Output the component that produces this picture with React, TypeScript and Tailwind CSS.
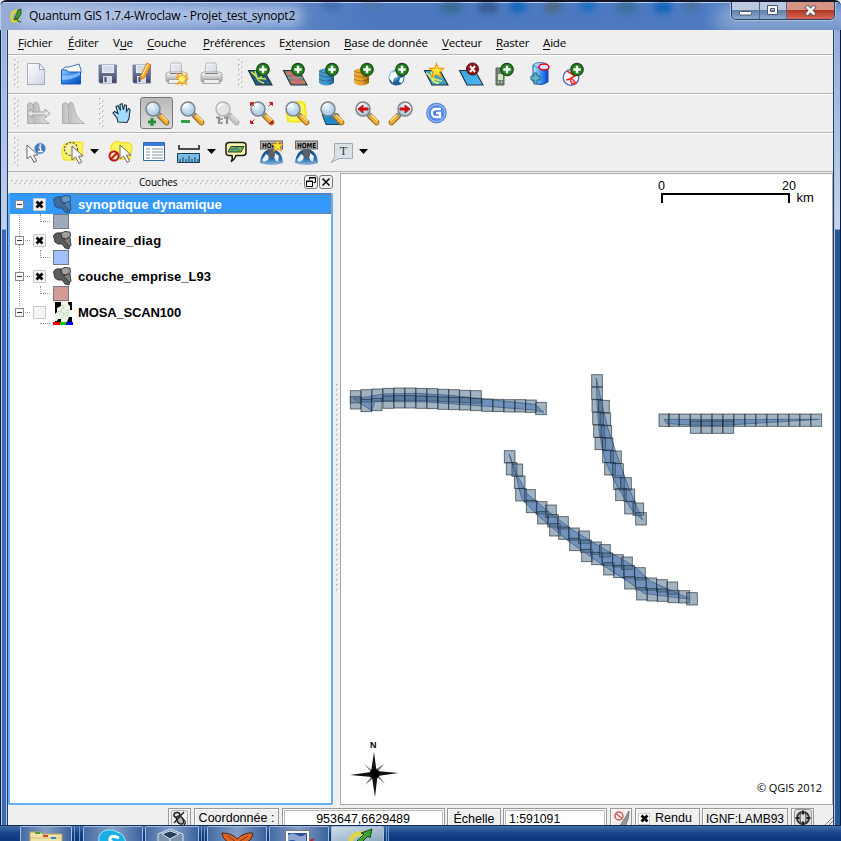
import React from "react";

type P = { children?: React.ReactNode };

function Cell({ children, active, w = "w-[35px]" }: P & { active?: boolean; w?: string }) {
  return (
    <button className={`relative flex h-9 shrink-0 items-center justify-center ${w}`}>
      {active && <span className="absolute inset-x-px inset-y-[2px] rounded-[3px] border border-[#777] bg-linear-to-b from-[#b9b9b9] to-[#dadada]" />}
      <svg className="relative h-9 w-[35px] shrink-0" viewBox="0 0 35 36">{children}</svg>
    </button>
  );
}

function Defs() {
  return (
    <svg className="absolute h-0 w-0">
      <defs>
        <linearGradient id="paper" x2="1" y2="1"><stop stopColor="#fff" /><stop offset="1" stopColor="#ccd4e6" /></linearGradient>
        <linearGradient id="disk" x2="0" y2="1"><stop stopColor="#8b93b5" /><stop offset="1" stopColor="#3c4569" /></linearGradient>
        <linearGradient id="folder" x2="1" y2="1"><stop stopColor="#9ad0ff" /><stop offset=".5" stopColor="#2a80e8" /><stop offset="1" stopColor="#0a48b0" /></linearGradient>
        <linearGradient id="metal" x2="0" y2="1"><stop stopColor="#fff" /><stop offset="1" stopColor="#9d9d9d" /></linearGradient>
        <linearGradient id="dbBlue"><stop stopColor="#4d9ac4" /><stop offset=".5" stopColor="#3d9bd3" /><stop offset="1" stopColor="#1d618d" /></linearGradient>
        <linearGradient id="dbGold"><stop stopColor="#edb13e" /><stop offset=".5" stopColor="#e9a32a" /><stop offset="1" stopColor="#96600c" /></linearGradient>
        <linearGradient id="can"><stop stopColor="#d0eaff" /><stop offset=".5" stopColor="#3d9cf4" /><stop offset="1" stopColor="#0844c6" /></linearGradient>
        <linearGradient id="sheet" x2="1" y2="1"><stop stopColor="#3aa3df" /><stop offset="1" stopColor="#4bb9f0" /></linearGradient>
        <radialGradient id="globe" cx=".3" cy=".3"><stop stopColor="#fff" /><stop offset=".5" stopColor="#65b2dc" /><stop offset="1" stopColor="#1c5c94" /></radialGradient>
        <radialGradient id="lens" cx=".4" cy=".3"><stop stopColor="#f5faff" /><stop offset="1" stopColor="#b2d2e9" /></radialGradient>
        <radialGradient id="google"><stop stopColor="#3c74dc" /><stop offset="1" stopColor="#5b94f4" /></radialGradient>
        <linearGradient id="dome" x2="0" y2="1"><stop stopColor="#16426f" /><stop offset=".6" stopColor="#2b6db4" /><stop offset="1" stopColor="#8ab6dd" /></linearGradient>
        <linearGradient id="grey"><stop stopColor="#bdbdbd" /><stop offset="1" stopColor="#e2e2e2" /></linearGradient>
        <pattern id="gripV" width="5" height="5" patternUnits="userSpaceOnUse"><path d="M0 0h2v2H0zM3 2.5h2v2H3z" fill="#c0c0c0" /><path d="M1 1h1.500v1.500H1zM4 3.500h1v1.500H4z" fill="#fff" /></pattern>
      </defs>
    </svg>
  );
}

const Grip = ({ w = "w-[5px]", h = "h-[30px]" }) => (
  <svg className={`${w} ${h} shrink-0`}><rect width="100%" height="100%" fill="url(#gripV)" /></svg>
);

const Plus = ({ x = 20, y = 13.5 }) => (
  <g><circle cx={x} cy={y} r="6.2" fill="#23811f" stroke="#174a17" strokeWidth="1.3" /><path d={`M${x - 3.7} ${y}h7.4M${x} ${y - 3.7}v7.4`} stroke="#fff" strokeWidth="2.4" /></g>
);

const Star = ({ x = 0, y = 0, s = 1 }) => (
  <path transform={`translate(${x} ${y}) scale(${s})`} d="M0-10 2.500-3.500 9.500-3.500 4 1.500 6.500 9 0 4.500-6.500 9-4 1.500-9.500-3.500-2.500-3.500z" fill="#ffe537" stroke="#f29a0b" strokeWidth="1.4" />
);

const Lens = ({ flip, grey, children }: P & { flip?: boolean; grey?: boolean }) => (
  <g transform={flip ? "translate(35 0) scale(-1 1)" : undefined}>
    <path d="M20.500 20.500l7 7" stroke={grey ? "#aaa" : "#8c6424"} strokeWidth="5.6" strokeLinecap="round" />
    <path d="M21.500 21l6 6.500" stroke={grey ? "#c7c7c7" : "#f6ab31"} strokeWidth="3.900" strokeLinecap="round" />
    <path d="M22.500 20l6 6" stroke={grey ? "#ddd" : "#ffdf86"} strokeWidth="1.5" />
    <path d="M18 18l3 3" stroke={grey ? "#bbb" : "#999"} strokeWidth="3.500" />
    <circle cx="14" cy="14" r="7" fill={grey ? "#e4e4e4" : "url(#lens)"} stroke={grey ? "#b4b4b4" : "#7c8389"} strokeWidth="1.5" />
    <path d="M9 13q1-4 5-4" fill="none" stroke="#fff" strokeWidth="1.5" />
    {children}
  </g>
);

const Printer = () => (
  <g>
    <path d="M13 8h10l1 10H12z" fill="url(#paper)" stroke="#aaa" strokeWidth=".8" />
    <path d="M14 11h8M14 13h8" stroke="#ddd" />
    <path d="M8 20q0-3 3-3h15q3 0 3 3v5q0 2-2 2H10q-2 0-2-2z" fill="url(#metal)" stroke="#999" strokeWidth=".8" />
    <path d="M12 18.500h13" stroke="#777" strokeWidth="1.2" /><path d="M11 24.500h15l1 4H10z" fill="#eee" stroke="#888" strokeWidth=".7" />
  </g>
);

const Disk = () => (
  <g>
    <path d="M10 9h17.500v18H11l-1-1z" fill="url(#disk)" stroke="#687095" strokeWidth=".8" />
    <path d="M13 9h12v8H13z" fill="#e9edf5" /><path d="M14 11h10M14 13h10M14 15h10" stroke="#b6bfd0" strokeWidth=".7" />
    <path d="M14 20h9v7h-9z" fill="#d6dbe6" /><path d="M15.500 21h2v5h-2z" fill="#424b66" />
  </g>
);

const Sheet = ({ fill = "url(#sheet)" }) => <path d="M5.500 14.500H21L29 29H13z" fill={fill} stroke="#20313c" strokeWidth="1.1" />;
const Db = ({ fill }: { fill: string }) => (
  <g><path d="M6 15v12q7 5 15 0V15z" fill={fill} /><ellipse cx="13.5" cy="15" rx="7.5" ry="2.6" fill={fill} /><path d="M6 19q7 4 15 0M6 23q7 4 15 0M6 15q7 4 15 0" fill="none" stroke="#0004" strokeWidth="1.2" /></g>
);
const Cursor = ({ x = 0, y = 0 }) => <path transform={`translate(${x} ${y})`} d="M0 0v14l3.500-3 3.500 6.500 2.700-1.500-3.200-5.800 4.500-.2z" fill="#fff" stroke="#666" strokeWidth="1" />;
const Home = () => (
  <g>
    <path d="M6 29q1-13 11.500-14 10.500 1 11.500 14-11 4-23 0z" fill="url(#dome)" />
    <path d="M12 20l3 2-1 4-4 2-2-2zM21 19l4 3-1 5 3 1-5-1-2-4z" fill="#e9f1f7" />
    <path d="M14 14h7v8l-3.500 3-3.500-3z" fill="#5a6066" />
    <rect x="6.500" y="7" width="22" height="8" fill="#b3b3b3" stroke="#666" /><text x="17.500" y="13.700" textAnchor="middle" fontSize="7" fontWeight="700" fontFamily="DejaVu Sans" textLength="19" lengthAdjust="spacingAndGlyphs">HOME</text>
  </g>
);
const Hist = () => <g fill="url(#grey)" stroke="#b0b0b0" strokeWidth="1"><path d="M8.500 28.500V9q2-3 5 0l2 11 4 8.500z" /><path d="M14.500 28.500V9l2-2q2 0 3 3 2 14 11 18.500z" /></g>;

const menus: [string, number, string][] = [
  ["Fichier", 0, "w-[50px]"], ["Éditer", 0, "w-[45px]"], ["Vue", 1, "w-[34px]"], ["Couche", 0, "w-[56px]"], ["Préférences", 0, "w-[76px]"],
  ["Extension", 1, "w-[65px]"], ["Base de donnée", 0, "w-[98px]"], ["Vecteur", 0, "w-[54px]"], ["Raster", 0, "w-[47px]"], ["Aide", 0, "w-[40px]"],
];

const Arrow = ({ m }: { m: string }) => <svg className={`h-[6px] w-[9px] shrink-0 ${m}`} viewBox="0 0 9 6"><path d="M0 0h9L4.500 5z" /></svg>;

function Toolbars() {
  const bar = "flex h-[39px] items-center border-b border-[#b5b5b5] shadow-[inset_0_1px_#fff] pl-[6px] bg-[#efefef]";
  return (
    <>
      <div className={bar}>
        <Grip />
        <Cell><path d="M8.500 7.500h12l5 6v15h-17z" fill="url(#paper)" stroke="#aab" /><path d="M20.500 7.500v6h5z" fill="#fff" stroke="#9aa0b5" /></Cell>
        <Cell><g transform="translate(-1)"><path d="M9 14l3-3h4l10-3 2 6v3H9z" fill="#fff" stroke="#456eb6" /><path d="M8.500 14h5l2 2h12v12h-19z" fill="url(#folder)" stroke="#1557bd" /><path d="M9 20q10 0 18-4v3q-8 5-18 5z" fill="#9bd0ff" opacity=".7" /></g></Cell>
        <Cell><Disk /></Cell>
        <Cell><g transform="translate(-1)"><Disk /></g><path d="M16 24l1-5 6-12 4 2-6 12z" fill="#fba62b" stroke="#c96c13" strokeWidth=".8" /><path d="M18 20l6-12" stroke="#ffe089" strokeWidth="1.5" /></Cell>
        <Cell><g transform="translate(-1 -1)"><Printer /></g><Star x={23} y={23} s={0.6} /><path d="M17.500 17.500l11 11M28.500 17.500l-11 11M23 15v15M16 23h14" stroke="#f8a719" strokeWidth="1.2" /><circle cx="23" cy="23" r="3" fill="#fff27a" /></Cell>
        <Cell><g transform="translate(-1 -1)"><Printer /></g></Cell>
        <div className="w-[9px]" /><Grip />
        <Cell><Sheet fill="#245e85" /><path d="M8 16q4 2 6 6t7 5M12 15l2 7 9 1M20 16l-3 7" fill="none" stroke="#d4e742" strokeWidth="1.500" /><Plus /></Cell>
        <Cell><Sheet fill="#7f7d84" /><path d="M8 17.500h14M13 26h14" stroke="#c4834e" strokeWidth="2.500" /><path d="M11 15h5l7 13h-5z" fill="#d8607c" /><path d="M10 22h15" stroke="#8d9a7c" strokeWidth="1.500" /><Plus /></Cell>
        <Cell><Db fill="url(#dbBlue)" /><Plus x={19} /></Cell>
        <Cell><Db fill="url(#dbGold)" /><Plus x={19} /></Cell>
        <Cell><circle cx="13.500" cy="21.500" r="8" fill="url(#globe)" /><path d="M8 17l5-1 2 5-4 1-1 5-4-5zM17 22l4-1-2 6-3-1z" fill="#f5fbff" /><Plus x={19} /></Cell>
        <Cell><g transform="translate(1)"><Sheet fill="#3e9fcb" /></g><path d="M8 17q4 2 6 6t7 4M13 16l3 7 8 2" fill="none" stroke="#def060" strokeWidth="1.800" /><Star x={18.500} y={15} s={0.75} /></Cell>
        <Cell><g transform="translate(1)"><Sheet /></g><circle cx="19.500" cy="13" r="6" fill="#91151a" stroke="#4a1115" /><path d="M17 10l5 6M22 10l-5 6" stroke="#fff" strokeWidth="2" /></Cell>
        <Cell><path d="M8 12h8v17H8z" fill="#718373" stroke="#566057" /><path d="M10 18h5v6h-5z" fill="#d6e4ca" /><path d="M10 26h1m2 0h1" stroke="#fff" /><Plus x={19} /></Cell>
        <Cell><path d="M10 9v17q7 5 15 0V9z" fill="url(#can)" stroke="#154eab" /><ellipse cx="17.500" cy="9" rx="7" ry="2.500" fill="#9ed8ff" stroke="#477eb9" /><ellipse cx="21" cy="11" rx="5" ry="3" fill="#d8e4ff" stroke="#ec0016" strokeWidth="1.500" /><path d="M11 17h3v3h3v4h-3v4h-3v-4H8v-4h3z" fill="#62b4cd" stroke="#206883" /></Cell>
        <Cell><circle cx="13" cy="21.500" r="7.800" fill="#fbfbff" stroke="#4a69c5" strokeWidth="1.300" /><path d="M9 15l8 5-4 2 5 5-4 1-2-5-4 1m6-9l5 1" fill="none" stroke="#f22" strokeWidth="1.500" /><Plus x={19} /></Cell>
      </div>
      <div className={bar}>
        <Grip />
        <Cell><Hist /><path d="M8 18.500l5-4.500v3h13v-3l5 4.500-5 4.500v-3H13v3z" fill="#e4e4e4" stroke="#a2a2a2" /></Cell>
        <Cell><Hist /></Cell>
        <div className="w-[10px]" /><Grip />
        <Cell><path d="M14 27l-1-4-4-5 1.500-1.500 3.500 2-2-7 2-1 2.500 5-.5-6 2-1 1.500 6.500 1-5 2 .5v6l2-3 1.500 1-1 9-2 4z" fill="#a4dcff" stroke="#1e3444" strokeWidth="1.100" /></Cell>
        <Cell active><Lens><path d="M13 23v8M9 27h8" stroke="#29943d" strokeWidth="3" /></Lens></Cell>
        <Cell><Lens><path d="M7 26.500h9" stroke="#35a149" strokeWidth="3.200" /></Lens></Cell>
        <Cell><Lens grey><path d="M7 22.500h3V29M12.500 23v2m0 2v2M15 22.500h3V29" fill="none" stroke="#8f8f8f" strokeWidth="2.200" /></Lens></Cell>
        <Cell><Lens /><g fill="#d11616" stroke="#d11616"><path d="M6.500 7.500h3L6.500 10.500zm1 1l3 3M28.500 7.500h-3l3 3zm-1 1l-3 3M6.500 28.500h3L6.500 25.500zm1-1l3-3M28.500 28.500h-3l3-3z" /></g></Cell>
        <Cell><path d="M17 8q6-3 9 2l1 11-6 6-12-1-1-8z" fill="#fff65a" stroke="#f5e719" strokeWidth="2" /><Lens /></Cell>
        <Cell><path d="M8 19l4 10.500h16.500L24 19z" fill="#208ac6" stroke="#234056" /><Lens /></Cell>
        <Cell><Lens><path d="M9 14l5-4v3h5v2h-5v3z" fill="#c11" stroke="#c11" /></Lens></Cell>
        <Cell><Lens flip><path d="M9 14l5-4v3h5v2h-5v3z" fill="#c11" stroke="#c11" /></Lens></Cell>
        <Cell><circle cx="17.500" cy="18" r="9.700" fill="url(#google)" stroke="#5a82cf" strokeWidth="1.200" /><circle cx="17.500" cy="18" r="8.500" fill="none" stroke="#bad4ff" strokeWidth=".8" /><path d="M22 14h-5q-4 0-4 4t4 4h4v-4h-4" fill="none" stroke="#fff" strokeWidth="2.300" /></Cell>
      </div>
      <div className={bar}>
        <Grip />
        <Cell><Cursor x={8} y={11} /><circle cx="21" cy="14.500" r="5.500" fill="#3d77bd" stroke="#9abadf" /><path d="M19.500 13.500h2v4m-2.500 0h5" fill="none" stroke="#fff" strokeWidth="1.500" /><circle cx="21.300" cy="11.300" r="1.100" fill="#fff" /></Cell>
        <Cell><path d="M9 12q5-6 20-3l-1 8 1 4-8 5H10l-2-6z" fill="#fff45a" stroke="#f3e52e" strokeWidth="1.500" /><circle cx="17" cy="15" r="6.500" fill="#f6f1a0" stroke="#555" strokeWidth="1.300" strokeDasharray="2 1.500" /><Cursor x={18} y={12} /></Cell>
        <Arrow m="ml-[1px] mr-[3px]" />
        <Cell><path d="M9 12q5-7 10-3 11-2 11 5l-2 11H9z" fill="#fff35a" stroke="#eee233" strokeWidth="1.500" /><Cursor x={18} y={11} /><circle cx="12" cy="22" r="4.500" fill="#fff8" stroke="#c11425" strokeWidth="2" /><path d="M9 25l6-6" stroke="#c11425" strokeWidth="2" /></Cell>
        <Cell><path d="M6.500 8.500h21v18h-21z" fill="#fff" stroke="#3067a7" /><path d="M7 9h20v3H7z" fill="#397de0" /><path d="M9 15h4m2 0h11M9 18h4m2 0h11M9 21h4m2 0h11M9 24h4m2 0h11" stroke="#8490a0" /></Cell>
        <Cell><path d="M7 11v4h20v-4" fill="none" stroke="#161616" strokeWidth="1.500" /><path d="M5.500 19.500h22v9h-22z" fill="#78bce8" stroke="#173c54" /><path d="M8 29v-4m3 4v-6m3 6v-4m3 4v-7m3 7v-4m3 4v-6m3 6v-4" stroke="#173c54" /></Cell>
        <Arrow m="ml-0 mr-[3px]" />
        <Cell><path d="M10 8.500h14q3 0 3 3v7q0 3-3 3h-7q-2 5-5 6 2-2 1-6h-3q-3 0-3-3v-7q0-3 3-3z" fill="#fffbab" stroke="#1b1b16" strokeWidth="1.500" /><path d="M12 12.500h13l-3 5.500H9z" fill="#72b34c" stroke="#253644" /><path d="M12 16l6-2 2 3" stroke="#2364a7" fill="none" /></Cell>
        <Cell><Home /><Star x={23.500} y={12} s={0.6} /></Cell>
        <Cell><Home /></Cell>
        <Cell><path d="M10.500 9.500h18v15H15l-8 4 3.500-5z" fill="#dae2e8" stroke="#9dabb4" /><text x="19.500" y="21" textAnchor="middle" fontSize="12" fill="#333" fontFamily="Liberation Serif">T</text></Cell>
        <Arrow m="ml-0" />
      </div>
    </>
  );
}

const Poly = ({ sel }: { sel?: boolean }) => (
  <svg className="h-[19px] w-[19px] shrink-0" viewBox="0 0 19 19">
    <g stroke={sel ? "#244a70" : "#303030"} strokeWidth=".9" strokeLinejoin="round">
      <path d="M.5 5Q2 1 8 2l1 5 4 3 4 3-1 5-4-1-3-4H5l-3-2z" fill={sel ? "#3f6d9a" : "#5c5c5c"} />
      <path d="M12 7.500l5-1 1 8-2 1-3-4-2-2z" fill={sel ? "#5682a8" : "#7f7f7f"} />
      <path d="M8 2l4-1.500 5 .5.500 4.500-4.500 2.500-4-1z" fill={sel ? "#6596c3" : "#a0a0a0"} />
    </g>
  </svg>
);

const XMark = () => <svg className="h-[9px] w-[9px]" viewBox="0 0 9 9"><path d="M1.500 1.500l6 6m0-6l-6 6" stroke="#000" strokeWidth="2.800" /></svg>;

function Layer({ name, sel, raster, track, color }: { name: string; sel?: boolean; raster?: boolean; track: string; color?: string }) {
  return (
    <div className="h-9">
      <div className={`flex h-[20px] items-center ${sel ? "bg-[#3399ff]" : ""}`}>
        <span className="ml-[5px] flex h-[9px] w-[9px] shrink-0 items-center justify-center border border-[#888] bg-[#fafafa]"><span className="h-px w-[5px] bg-[#333]" /></span>
        <span className="ml-px w-[5px] border-t border-dotted border-[#999]" />
        <span className="ml-[3px] flex h-[13px] w-[13px] shrink-0 items-center justify-center rounded-[1px] border border-[#c8c8c8] bg-[#f5f5f5]">{!raster && <XMark />}</span>
        <span className="ml-[7px] flex w-[19px] shrink-0 justify-center">
          {raster ? (
            <svg className="-mb-[3px] h-[23px] w-[20px] shrink-0" viewBox="0 0 20 23"><path d="M2 0h17v20H2z" fill="#000" /><path d="M8 0h7v2l2 2v4h2v7h-3l-2 5H8v-3H5l-1 2H2v-7l2-2V6l4-2z" fill="#eef5e8" /><path d="M9 3l2 3-4 3 5 3-3 4m6-8l-2 3M5 9l3 5m6 0l2-4" fill="none" stroke="#8eae85" strokeDasharray="1 1" /><path d="M0 20h7v3H0z" fill="red" /><path d="M7 20h6v3H7z" fill="#0c0" /><path d="M13 20h7v3h-7z" fill="#00f" /></svg>
          ) : <Poly sel={sel} />}
        </span>
        <span className={`ml-[3px] flex h-full flex-1 items-center border border-dotted pt-[2px] pl-[2px] text-[13px] font-bold whitespace-nowrap ${track} ${sel ? "border-[#b27440] text-white" : "border-transparent text-black"}`}>{name}</span>
      </div>
      <div className="flex h-4 items-start pl-[30px]">
        <span className={`w-[10px] border-b border-dotted border-[#999] ${raster ? "h-[2px]" : "h-[8px] border-l"}`} />
        {color && <span className={`ml-[3px] h-[15px] w-[16px] border border-[#778] ${color}`} />}
      </div>
    </div>
  );
}

function Layers() {
  return (
    <section className="flex w-[326px] flex-col pr-px">
      <div className="flex h-[21px] items-center pl-[3px]">
        <Grip w="w-[120px]" h="h-[5px]" />
        <span className="w-[51px] pl-[8px] text-[10px] tracking-[-0.2px] text-black font-['Open_Sans','Noto_Sans',sans-serif]">Couches</span>
        <Grip w="w-[119px]" h="h-[5px]" />
        <span className="-mt-[2px] ml-[3px] flex h-[14px] w-[14px] items-center justify-center rounded-[3px] border border-[#777]"><svg className="h-[10px] w-[10px]" viewBox="0 0 10 10"><path d="M3.500 2.500v-2h6v5h-2M3 1h7M.5 4h6v5.500h-6zM0 4.500h7" fill="none" stroke="#000" /></svg></span>
        <span className="-mt-[2px] ml-px flex h-[14px] w-[14px] items-center justify-center rounded-[3px] border border-[#777]"><svg className="h-2 w-2" viewBox="0 0 8 8"><path d="M.5.5l7 7m0-7l-7 7" stroke="#000" strokeWidth="1.500" /></svg></span>
      </div>
      <div className="relative h-[612px] rounded-[2px] border-2 border-t border-[#64b0f5] border-t-[#2d87dc] bg-white">
        <span className="absolute top-4 left-[9px] h-[96px] border-l border-dotted border-[#999]" />
        <div className="relative">
          <Layer name="synoptique dynamique" sel track="tracking-[0.12px]" color="bg-[#9eacba]" />
          <Layer name="lineaire_diag" track="tracking-[0.3px]" color="bg-[#a2c1fb]" />
          <Layer name="couche_emprise_L93" track="tracking-[0.05px]" color="bg-[#d49992]" />
          <Layer name="MOSA_SCAN100" raster track="tracking-[-0.15px]" />
        </div>
      </div>
    </section>
  );
}

// Tile corners are in tripled pixels; each list has its own origin on the map.
const vertical = [[304,13],[304,50],[305,88],[325,90],[307,126],[329,128],[310,164],[332,166],[314,201],[336,203],[337,240],[361,242],[343,277],[367,280],[370,321],[391,322],[376,354],[401,356],[403,394],[428,398],[436,427]];
const diagonal = [[42,241],[48,277],[65,281],[72,317],[76,355],[103,358],[108,390],[138,394],[142,424],[166,404],[172,433],[178,460],[202,439],[205,470],[235,473],[238,504],[265,482],[271,509],[274,537],[301,515],[304,546],[328,523],[335,548],[340,577],[367,553],[370,585],[394,560],[400,586],[403,619],[433,592],[436,622],[439,652],[467,623],[470,655],[499,628],[501,656],[530,635],[533,660],[566,661],[589,667]];
const leftTiles = [[30,61],[62,58],[95,56],[128,54],[161,53],[194,53],[227,54],[260,55],[293,57],[325,58],[358,60],[391,61],[30,79],[62,87],[93,84],[128,77],[161,76],[194,76],[227,77],[260,78],[293,80],[325,81],[358,82],[391,84],[425,86],[458,87],[491,88],[524,88],[556,89],[586,96]];
const rightTiles = [...[56,84,117,150,183,215,248,281,314,347,380,413,446,479,512].map((x) => [x, 731]), ...[150,183,215,248].map((x) => [x, 752])];

function Tiles({ x, y, list, shape }: { x: number; y: number; list: number[][]; shape: string }) {
  return (
    <g transform={`translate(${x} ${y}) scale(.33333)`}>
      <path d={shape} fill="#98bbf2" stroke="#3c5c86" strokeWidth="2.500" />
      {list.map(([a, b], i) => <rect key={i} x={a + 1} y={b + 1} width="32" height="37" fill="#4a6b88" fillOpacity=".52" stroke="#15202b" strokeOpacity=".66" strokeWidth="2.700" />)}
    </g>
  );
}

function MapView() {
  return (
    <svg className="h-full w-full" viewBox="341 174 491 630">
      <Tiles x={340} y={370} list={leftTiles} shape="M40 86L85 80 130 72 230 70 330 76 420 86 585 103 612 127 580 120 430 108 260 96 105 94 95 122Z" />
      <Tiles x={490} y={370} list={vertical} shape="M319 24L334 95 352 170 379 250 415 350 458 450 425 420 382 350 346 275 328 190 321 100Z" />
      <Tiles x={490} y={370} list={diagonal} shape="M57 252L84 320 112 372 165 416 245 478 330 530 435 590 482 634 600 687 550 682 462 670 425 642 335 583 235 513 145 438 96 388 76 310Z" />
      <Tiles x={640} y={170} list={rightTiles} shape="M72 748L80 761 150 765 215 767 280 764 538 748 440 748 360 749Z" />
      <path d="M662 203v-9h127v9" fill="none" stroke="#000" strokeWidth="2" />
      <g fontFamily="Liberation Sans, Arial, sans-serif" fontSize="12.500"><text x="658" y="190">0</text><text x="782" y="190">20</text><text x="796.500" y="202" fontSize="13">km</text></g>
      <text x="757" y="792" fontFamily="Open Sans, Noto Sans, sans-serif" fontSize="11" textLength="65">© QGIS 2012</text>
      <text x="370" y="747.500" fontFamily="Liberation Sans, sans-serif" fontSize="9" fontWeight="700">N</text>
      <path d="M364 764l9 7 11-7-7 9 8 11-9-8-11 9 8-11z" fill="#777" />
      <path d="M374 752l2.500 19 22 2-21 3-2.500 21-3-20-22-2 21-3z" fill="#111" /><circle cx="374.500" cy="774" r="5" fill="#000" />
    </svg>
  );
}

function Status() {
  const box = "flex h-[20px] shrink-0 items-center border border-[#999] shadow-[inset_1px_1px_#fff] whitespace-nowrap";
  return (
    <footer className="flex h-[20px] items-start overflow-hidden pt-[3px] pl-[160px] text-[13px] text-black">
      <span className={`${box} w-[23px] justify-center`}><svg className="h-[17px] w-[17px]" viewBox="0 0 17 17"><rect x=".5" y=".5" width="16" height="16" rx="2" fill="none" stroke="#aaa" /><ellipse cx="6" cy="5" rx="3" ry="2.500" fill="none" stroke="#222" strokeWidth="1.500" /><ellipse cx="9" cy="10" rx="3" ry="4.500" transform="rotate(-35 9 10)" fill="#bbb" stroke="#222" strokeWidth="1.500" /><path d="M3 13l10-11M12 9q4 3 1 6" fill="none" stroke="#222" strokeWidth="1.300" /></svg></span>
      <span className={`${box} ml-[3px] w-[85px] justify-center pt-px text-[12.500px]`}>Coordonnée :</span>
      <span className={`${box} ml-[3px] w-[163px] justify-end bg-white pt-[3px] pr-[34px] text-[12.500px] outline outline-1 -outline-offset-3 outline-[#bbb]`}>953647,6629489</span>
      <span className={`${box} ml-[2px] w-[54px] justify-center pt-[2px] text-[12.500px]`}>Échelle</span>
      <span className={`${box} ml-[2px] w-[104px] bg-white pt-[3px] pl-[5px] text-[12.300px] outline outline-1 -outline-offset-3 outline-[#bbb]`}>1:591091</span>
      <span className={`${box} ml-[3px] w-[22px] justify-center`}><svg className="h-[17px] w-[18px]" viewBox="0 0 18 17"><path d="M17 1l-4 7-6 9h6l3-8z" fill="#999" stroke="#777" /><circle cx="7" cy="6" r="4" fill="#eee" stroke="#d45a5a" strokeWidth="1.500" /><path d="M4 3.500l6 5" stroke="#d45a5a" strokeWidth="1.500" /></svg></span>
      <span className={`${box} ml-[3px] w-[65px] gap-[5px] pt-px pl-[2px] text-[12.500px]`}><i className="flex h-[12px] w-[12px] items-center justify-center border border-[#ccc] bg-white"><XMark /></i>Rendu</span>
      <span className={`${box} ml-[2px] w-[86px] justify-center pt-px text-[12px]`}>IGNF:LAMB93</span>
      <span className={`${box} ml-[3px] w-[23px] justify-center`}><svg className="h-[18px] w-[18px]" viewBox="0 0 18 18"><rect x=".5" y=".5" width="17" height="17" rx="2" fill="#ddd" stroke="#999" /><circle cx="9" cy="9" r="6" fill="#ccc" stroke="#333" strokeWidth="1.800" /><ellipse cx="9" cy="9" rx="3" ry="6" fill="#ddd" stroke="#444" /><path d="M1.500 9h4m7 0h4M9 1.500v4m0 7v4" fill="none" stroke="#222" strokeWidth="2" /></svg></span>
      <svg className="ml-auto h-[17px] w-[9px]" viewBox="0 0 9 17"><path d="M1 17l8-8M5 17l4-4" stroke="#888" /></svg>
    </footer>
  );
}

function Task({ children, w, light }: P & { w: string; light?: boolean }) {
  return <div className={`flex h-full shrink-0 justify-center overflow-hidden rounded-t-[2px] border-x border-t border-[#a4bddd] ${w} ${light ? "bg-linear-to-br from-[#cdddea] to-[#8ba7bd]" : "bg-linear-to-r from-[#456ba3] via-[#849fc6] to-[#3c629c]"}`}><svg className="h-4 w-[40px] shrink-0" viewBox="0 0 40 16">{children}</svg></div>;
}

export default function App() {
  return (
    <main className="flex h-[841px] w-[841px] flex-col overflow-hidden bg-[#efefef] text-black font-['Liberation_Sans',Arial,sans-serif]">
      <Defs />
      <div className="relative h-[825px] overflow-hidden rounded-t-[6px] border-t-2 border-[#12152c] bg-[#4b78bd]">
        <header className="relative flex h-[28px] items-center overflow-hidden bg-linear-to-r from-[#98acd4] via-[#4b78bf] via-45% to-[#4e7bc2] pl-[9px] shadow-[inset_0_1px_#bcd2ef,inset_1px_0_#b8d0ee]">
          <span className="absolute top-[4px] left-[18px] h-[20px] w-[285px] rounded-full bg-[#c5d5f0] opacity-70 blur-[6px]" />
          <span className="absolute top-0 left-[322px] h-[7px] w-[18px] rounded-full bg-[#33589d] opacity-60 blur-[3px]" />
          <span className="absolute top-0 left-[362px] h-[7px] w-[18px] rounded-full bg-[#56749a] opacity-60 blur-[3px]" />
          <span className="absolute top-0 left-[440px] h-[11px] w-[22px] rounded-full bg-[#316887] opacity-80 blur-[3px]" />
          <span className="absolute top-0 left-[478px] h-[11px] w-[20px] rounded-full bg-[#34518b] opacity-80 blur-[3px]" />
          <span className="absolute top-0 left-[510px] h-[10px] w-[16px] rounded-full bg-[#0866bc] opacity-90 blur-[3px]" />
          <span className="absolute top-0 left-[545px] h-[10px] w-[16px] rounded-full bg-[#56626a] opacity-80 blur-[3px]" />
          <span className="absolute top-0 left-[580px] h-[9px] w-[16px] rounded-full bg-[#116dc0] opacity-90 blur-[3px]" />
          <span className="absolute top-0 left-[617px] h-[11px] w-[20px] rounded-full bg-[#356f92] opacity-80 blur-[3px]" />
          <span className="absolute top-0 left-[654px] h-[11px] w-[18px] rounded-full bg-[#0c62bc] opacity-90 blur-[3px]" />
          <span className="absolute top-0 left-[686px] h-[8px] w-[12px] rounded-full bg-[#4a6a85] opacity-70 blur-[3px]" />
          <span className="absolute top-[2px] left-[715px] h-[28px] w-[150px] rounded-full bg-[#a5b9d9] opacity-70 blur-[9px]" />
          <svg className="relative h-4 w-[14px] shrink-0" viewBox="0 0 14 16"><path d="M8 3Q2 3 2.500 10q.5 4 4 3l4-2" fill="none" stroke="#dbd23c" strokeWidth="3" /><path d="M5 12l4-10 3-1v5l-3 5z" fill="#3f982b" stroke="#194818" strokeWidth=".8" /><path d="M7 10l2 3 3 1" stroke="#1e6330" strokeWidth="1.200" fill="none" /></svg>
          <h1 className="relative ml-[6px] text-[12px] tracking-[-0.23px] whitespace-nowrap font-['Open_Sans','Noto_Sans',sans-serif]">Quantum GIS 1.7.4-Wroclaw - Projet_test_synopt2</h1>
          <div className="absolute top-0 right-[6px] flex h-[18px] w-[104px] overflow-hidden rounded-b-[5px] border border-t-0 border-[#273d63] text-white shadow-[0_0_0_1px_#aac0df]">
            {[0, 1].map((i) => <span key={i} className="flex w-[27.500px] items-center justify-center border-r border-[#4e6687] bg-linear-to-b from-[#bac9dd] from-45% via-[#627fa9] via-50% to-[#8ba9d0]"><svg className="h-[11px] w-[13px]" viewBox="0 0 13 11">{i ? <path d="M1.500.5h10v9h-10zM4.500 3.500v3h4v-3z" fill="#f5f5f5" fillRule="evenodd" stroke="#4b5872" /> : <rect x=".5" y="6.500" width="12" height="3.500" rx="1" fill="#fff" stroke="#4b5872" />}</svg></span>)}
            <span className="flex flex-1 items-center justify-center bg-linear-to-b from-[#d69486] from-45% via-[#b53524] via-50% to-[#d66956]"><svg className="h-[11px] w-[13px]" viewBox="0 0 13 11"><path d="M2 1l9 9m0-9l-9 9" stroke="#56484f" strokeWidth="4.500" /><path d="M2.500 1.500l8 8m0-8l-8 8" stroke="#f7f7f7" strokeWidth="2.800" /></svg></span>
          </div>
        </header>
        <div className="flex h-[795px]">
          <div className="w-[8px] shrink-0 border-l border-r border-l-[#0c1a36] border-r-[#263d5e] bg-linear-to-b from-[#97b1dd] from-0% via-[#bfd1ed] via-25% to-[#3d6bb3] to-[25.2%] shadow-[inset_1px_0_#b8d2f4,inset_-1px_0_#a9c7ed]" />
          <div className="flex w-[825px] flex-col bg-[#efefef] shadow-[0_-1px_#263d5e]">
            <nav className="flex h-[25px] items-center border-b border-[#b5b5b5] pt-[2px] pl-[10px] text-[11.600px] font-['Open_Sans','Noto_Sans',sans-serif]">
              {menus.map(([m, i, w]) => <span key={m} className={`${w} shrink-0 tracking-[-0.22px] whitespace-nowrap`}>{m.slice(0, i)}<u className="underline-offset-2">{m[i]}</u>{m.slice(i + 1)}</span>)}
            </nav>
            <Toolbars />
            <div className="flex h-[633px]">
              <Layers />
              <div className="flex w-[6px] items-center justify-center"><svg className="h-[210px] w-[3px]"><rect width="3" height="210" fill="url(#gripV)" /></svg></div>
              <section className="mt-px h-[632px] w-[493px] border border-[#aaa] bg-white"><MapView /></section>
            </div>
            <Status />
          </div>
          <div className="w-[8px] shrink-0 border-l border-r border-l-[#263d5e] border-r-[#071b3a] bg-linear-to-b from-[#91acd9] from-0% via-[#c5d5ed] via-25% to-[#225894] to-[25.2%] shadow-[inset_1px_0_#a6c4ea]" />
        </div>
      </div>
      <div className="flex h-4 border-t border-[#122c57] bg-linear-to-b from-[#426eaa] via-[#164488] to-[#0b377b] pl-[20px]">
        <Task w="w-[52px]"><path d="M4 8V5h10l2 2h20v9H4z" fill="#f1e3a8" stroke="#b9a15b" /><path d="M5 11h29" stroke="#d3bd74" /><path d="M9 6h5" stroke="#4d9e31" strokeWidth="2" /><path d="M17 9h5" stroke="#d24b31" strokeWidth="2" /><path d="M25 11h5" stroke="#2c8fd0" strokeWidth="2" /></Task>
        <div className="mr-[3px] ml-[2px] w-[6px] border-x border-[#7194c3]" />
        <Task w="w-[60px]"><path d="M6 16Q4 5 14 3q7-1 10 2 7 1 9 11z" fill="#18aee8" stroke="#a9e6fa" /><path d="M26 11q-8-4-9 1-1 3 7 4" stroke="#fff" strokeWidth="3" fill="none" /></Task>
        <div className="w-[2px]" />
        <Task w="w-[54px]"><path d="M6 7l12-5 13 5v10H6z" fill="#7892ab" stroke="#d0dfe8" /><path d="M10 7l8-3 9 3-9 5z" fill="#283d59" stroke="#d9e9f3" /><path d="M18 12v4" stroke="#e5eef5" /></Task>
        <div className="mr-[2px] ml-[2px] w-[4px] border-x border-[#7194c3]" />
        <Task w="w-[60px]"><path d="M5 6q10 0 15 6Q27 5 36 6q-1 9-10 10H14Q6 14 5 6z" fill="#df6421" stroke="#42261c" /><path d="M11 9l9 7 11-7" stroke="#743415" fill="none" /></Task>
        <div className="w-[2px]" />
        <Task w="w-[60px]"><path d="M6.500 3.500h24v13h-24z" fill="#f8f8f8" stroke="#777" /><path d="M9 6h19v10H9z" fill="#29519e" /><path d="M9 8q5-3 9 0t9-1v9h-8q-4-5-10-2z" fill="#b9cce6" opacity=".7" /><path d="M31 14l4-2" stroke="#b22532" strokeWidth="2" /></Task>
        <div className="w-[2px]" />
        <Task w="w-[53px]" light><path d="M26 7q-13-2-14 10" fill="none" stroke="#ded449" strokeWidth="5" /><path d="M17 16l9-9-3-1 11-4-2 9-2-2-7 7z" fill="#3da231" stroke="#164516" /></Task>
        <div className="ml-[2px] w-[3px] border-x border-[#7194c3]" />
      </div>
    </main>
  );
}
